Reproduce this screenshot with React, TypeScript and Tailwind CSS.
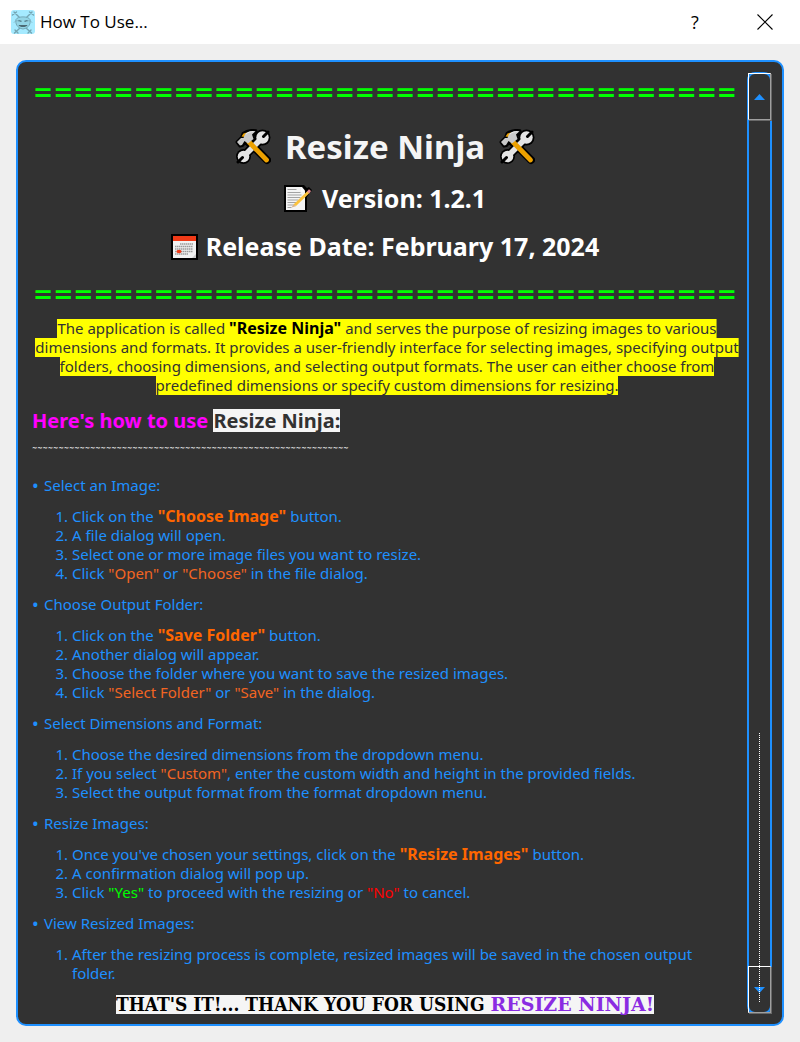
import type { ReactNode } from 'react';

function AppLogo() {
  return (
    <svg className="size-6" viewBox="0 0 24 24" aria-hidden="true">
      <rect width="24" height="24" rx="3" fill="#a5eaff" />
      <g stroke="#74a5b3" strokeWidth="1.4" fill="none" strokeLinecap="round">
        <path d="M3 2l7 7M21 2l-7 7M1.5 5l4-3M22.500 5l-4-3M9 18l-5.500 5M15 18l5.500 5" />
        <path d="M4 20l3 3M20 20l-3 3" />
      </g>
      <path d="M5 9.500C6.500 6 17.500 6 19 9.500c.8 4-.8 8.500-7 9.500-6.200-1-7.800-5.500-7-9.500z" fill="#93d5e6" stroke="#74a9b8" strokeWidth="1" />
      <path d="M3 12.500c2-2.500 4-2 5-1M21 12.500c-2-2.500-4-2-5-1" stroke="#7fb2c0" fill="none" />
      <path d="M7.500 10.500l3 .8M16.500 10.500l-3 .8" stroke="#4d7480" strokeWidth="1.200" />
      <path d="M7.500 15h9c-1 2.800-8 2.800-9 0z" fill="#4b6973" />
    </svg>
  );
}

function Tools() {
  return (
    <svg className="size-9 shrink-0" viewBox="0 0 36 36" aria-hidden="true">
      <g fill="#000" stroke="#000">
        <circle cx="27.500" cy="8.500" r="8" stroke="none" />
        <circle cx="8.500" cy="27.500" r="7.500" stroke="none" />
        <path d="M9 27L27 9" strokeWidth="9" />
        <path d="M14 13L32 31" strokeWidth="8" strokeLinecap="round" />
        <path d="M2 13L6.500 8.500 8 4.500C12 1.500 16.500 1 21 1.800L21 4.500 17.500 7 19 10 13 16 10 13.500 7.500 16.500 5 17z" strokeWidth="3" strokeLinejoin="round" />
      </g>
      <circle cx="27.500" cy="8.500" r="6.200" fill="#e4e4e4" />
      <circle cx="8.500" cy="27.500" r="5.800" fill="#e4e4e4" />
      <path d="M9 27L27 9" stroke="#e4e4e4" strokeWidth="5.500" />
      <path d="M33 3L28.500 7.500M3 33L7.500 28.500" stroke="#000" strokeWidth="3" strokeLinecap="round" />
      <path d="M14 13L31.500 31" stroke="#eda100" strokeWidth="4.800" strokeLinecap="round" />
      <path d="M6.500 7.500L8.500 4.500 12 3.500 10 8z" fill="#eda100" />
      <path d="M2 13L6 9 8.500 9 10 5C13 2 16.500 1.500 20.500 2.200L17 5.500 18.500 10 13 14.500 9.500 12 7 16 5 16.500z" fill="#c9c9c9" />
      <path d="M11 5c2-1.700 4.500-2.500 7.500-2.200" stroke="#ececec" fill="none" />
    </svg>
  );
}

function Memo() {
  return (
    <svg className="h-[27px] w-7 shrink-0" viewBox="0 0 28 27" aria-hidden="true">
      <path d="M0 0h20l3 3 2-1 3 3-5 7v15H0z" fill="#000" />
      <path d="M2 2h16l3 3.500V25H2z" fill="#f4f4f4" />
      <path d="M17 2v4.500h4z" fill="#fff" />
      <path d="M3.500 4.500h9M3.500 7.500h13M3.500 10h14M3.500 12.500h13M3.500 15h11M3.500 17.500h9M3.500 20h8M3.500 22.500h4" stroke="#a3a3a3" />
      <path d="M9.500 19.500L23.500 6l2 2-13.500 13z" fill="#fcc33c" />
      <path d="M7.500 22.500l2-3 2.500 1.700z" fill="#d9b48c" />
      <path d="M23 6.500l2-2.300 2 1.800-1.700 2.500z" fill="#e58a93" />
    </svg>
  );
}

function Calendar() {
  return (
    <svg className="h-[26px] w-[27px] shrink-0" viewBox="0 0 27 26" aria-hidden="true">
      <path d="M0 0h27v26H0z" fill="#000" />
      <path d="M2 2h23v22H2z" fill="#f1f1f1" />
      <path d="M2 2h23v5H2z" fill="#f03a17" />
      <path d="M9 10h13M4 12.500h18M4 15h18M4 17.500h18M4 20h13" stroke="#9a9a9a" strokeWidth="1.400" strokeDasharray="1.500 .5" />
      <ellipse cx="8" cy="17.500" rx="2.600" ry="1.700" fill="#f03a17" />
      <path d="M21 24l4-4v4z" fill="#c9c9c9" />
    </svg>
  );
}

function Divider() {
  return (
    <p className="h-[29px] whitespace-nowrap pr-1 text-center font-['DejaVu_Sans',sans-serif] text-2xl/[31px] font-bold text-[#00ff00]">
      {'='.repeat(35)}
    </p>
  );
}

function Strong({ children }: { children: ReactNode }) {
  return <strong className="text-base/[19px] font-bold text-[#ff6600]">{children}</strong>;
}

function Quote({ children }: { children: ReactNode }) {
  return <span className="text-[#f26522]">{children}</span>;
}

const sections: { title: string; steps: ReactNode[] }[] = [
  {
    title: 'Select an Image:',
    steps: [
      <>Click on the <Strong>"Choose Image"</Strong> button.</>,
      'A file dialog will open.',
      'Select one or more image files you want to resize.',
      <>Click <Quote>"Open"</Quote> or <Quote>"Choose"</Quote> in the file dialog.</>,
    ],
  },
  {
    title: 'Choose Output Folder:',
    steps: [
      <>Click on the <Strong>"Save Folder"</Strong> button.</>,
      'Another dialog will appear.',
      'Choose the folder where you want to save the resized images.',
      <>Click <Quote>"Select Folder"</Quote> or <Quote>"Save"</Quote> in the dialog.</>,
    ],
  },
  {
    title: 'Select Dimensions and Format:',
    steps: [
      'Choose the desired dimensions from the dropdown menu.',
      <>If you select <Quote>"Custom"</Quote>, enter the custom width and height in the provided fields.</>,
      'Select the output format from the format dropdown menu.',
    ],
  },
  {
    title: 'Resize Images:',
    steps: [
      <>Once you've chosen your settings, click on the <Strong>"Resize Images"</Strong> button.</>,
      'A confirmation dialog will pop up.',
      <>
        Click <span className="text-[#00ff00]">"Yes"</span> to proceed with the resizing or{' '}
        <span className="text-[#ff0000]">"No"</span> to cancel.
      </>,
    ],
  },
  {
    title: 'View Resized Images:',
    steps: ['After the resizing process is complete, resized images will be saved in the chosen output folder.'],
  },
];

function TitleBar() {
  return (
    <header className="flex h-11 items-center bg-white pl-[11px] font-['Open_Sans',sans-serif] text-black">
      <AppLogo />
      <h1 className="ml-[5px] text-[17px]/6">How To Use...</h1>
      <button type="button" aria-label="Help" className="ml-auto h-11 w-[70px] text-lg/6">
        ?
      </button>
      <button type="button" aria-label="Close" className="flex h-11 w-[70px] items-center justify-center">
        <svg className="size-4" viewBox="0 0 16 16" aria-hidden="true">
          <path d="M.5.500l15 15M15.500.500l-15 15" stroke="#000" strokeWidth="1.100" />
        </svg>
      </button>
    </header>
  );
}

const arrowButton =
  'flex h-[47px] w-[23px] items-center justify-center border border-t-white border-l-white border-r-[#a0a0a0] border-b-[#a0a0a0] shadow-[1px_1px_0_#696969]';

function ScrollBar() {
  return (
    <div className="relative grid w-[25px] shrink-0">
      <div className="rounded-lg border-2 border-[#1e90ff] [grid-area:1/1]" />
      <div className="flex flex-col justify-between pt-px pb-px pl-px [grid-area:1/1]">
        <button type="button" aria-label="Scroll up" className={arrowButton}>
          <svg className="h-1.5 w-[11px]" viewBox="0 0 11 6" aria-hidden="true">
            <path d="M5.500 0L11 6H0z" fill="#1e90ff" />
          </svg>
        </button>
        <button type="button" aria-label="Scroll down" className={arrowButton}>
          <svg className="h-1.5 w-[11px]" viewBox="0 0 11 6" aria-hidden="true">
            <path d="M5.500 6L11 0H0z" fill="#1e90ff" />
          </svg>
        </button>
      </div>
      <div className="absolute bottom-3 left-3 h-[269px] w-px bg-[repeating-linear-gradient(to_bottom,#fff_0_1px,transparent_1px_2px)]" />
    </div>
  );
}

export default function App() {
  return (
    <div className="flex min-h-screen flex-col bg-[#efefef] font-['Noto_Sans',sans-serif]">
      <TitleBar />
      <main className="m-4 flex grow rounded-[10px] border-2 border-[#1e90ff] bg-[#323232] py-2.5 pr-2.5">
        <article className="grow pt-1.5 pr-[5px] pl-3.5 text-[15px]/[19px] text-[#1e90ff]">
          <Divider />
          <h2 className="mt-5 flex items-center justify-center gap-3.5 pr-1 text-[33px]/[39px] font-bold text-[#f5f5f5]">
            <Tools />
            Resize Ninja
            <Tools />
          </h2>
          <h3 className="mt-[18px] flex items-center justify-center gap-2.5 pr-1 text-[25px]/[29px] font-bold text-white">
            <Memo />
            Version: 1.2.1
          </h3>
          <h3 className="mt-[19px] mb-[19px] flex items-center justify-center gap-2 pr-1 text-[25px]/[29px] font-bold text-white">
            <Calendar />
            Release Date: February 17, 2024
          </h3>
          <Divider />
          <p className="mt-2.5 text-center text-[#323232]">
            <span className="bg-[linear-gradient(#ffff00,#ffff00)] bg-[length:100%_19px] bg-center bg-no-repeat [-webkit-box-decoration-break:clone] [box-decoration-break:clone]">
              The application is called <strong className="text-base/[19px] text-black">"Resize Ninja"</strong> and
              serves the purpose of resizing images to various dimensions and formats. It provides a user-friendly
              interface for selecting images, specifying output folders, choosing dimensions, and selecting output
              formats. The user can either choose from predefined dimensions or specify custom dimensions for resizing.
            </span>
          </p>
          <h3 className="mt-3.5 text-xl/[23px] font-bold text-[#ff00ff]">
            Here's how to use <span className="inline-block h-[23px] bg-[#f5f5f5] text-[#323232]">Resize Ninja:</span>
          </h3>
          <p className="mt-3 h-2 font-['DejaVu_Sans_Condensed',sans-serif] text-[7px]/[8px] font-bold text-white">
            {'~'.repeat(60)}
          </p>
          <ul className="mt-6">
            {sections.map((section) => (
              <li key={section.title} className="mb-3 last:mb-0">
                <p className="flex">
                  <span className="w-3 text-lg/[19px]">•</span>
                  {section.title}
                </p>
                <ol className="mt-3 list-decimal pr-3 pl-10">
                  {section.steps.map((step, i) => (
                    <li key={i}>{step}</li>
                  ))}
                </ol>
              </li>
            ))}
          </ul>
          <p className="mt-3 pr-1 text-center font-['DejaVu_Serif_Condensed','DejaVu_Serif',serif] text-[19px]/[19px] font-bold text-black">
            <span className="inline-block h-[19px] bg-[#f5f5f5]">
              THAT'S IT!... THANK YOU FOR USING{' '}
              <span className="font-['DejaVu_Serif',serif] text-[#8a2be2]">RESIZE NINJA!</span>
            </span>
          </p>
        </article>
        <ScrollBar />
      </main>
    </div>
  );
}
